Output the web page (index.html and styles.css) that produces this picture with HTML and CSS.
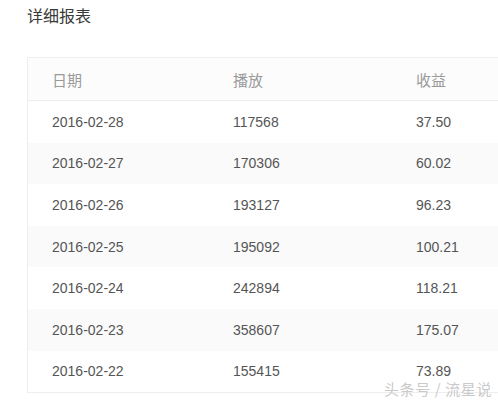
FILE: index.html
```html
<!DOCTYPE html>
<html>
<head>
<meta charset="utf-8">
<link rel="stylesheet" href="styles.css">
</head>
<body>
<div class="page">
  <h1 class="title">详细报表</h1>
  <div class="card">
    <div class="row head">
      <div class="c1">日期</div><div class="c2">播放</div><div class="c3">收益</div>
    </div>
    <div class="row"><div class="c1">2016-02-28</div><div class="c2">117568</div><div class="c3">37.50</div></div>
    <div class="row alt"><div class="c1">2016-02-27</div><div class="c2">170306</div><div class="c3">60.02</div></div>
    <div class="row"><div class="c1">2016-02-26</div><div class="c2">193127</div><div class="c3">96.23</div></div>
    <div class="row alt"><div class="c1">2016-02-25</div><div class="c2">195092</div><div class="c3">100.21</div></div>
    <div class="row"><div class="c1">2016-02-24</div><div class="c2">242894</div><div class="c3">118.21</div></div>
    <div class="row alt"><div class="c1">2016-02-23</div><div class="c2">358607</div><div class="c3">175.07</div></div>
    <div class="row"><div class="c1">2016-02-22</div><div class="c2">155415</div><div class="c3">73.89</div></div>
  </div>
  <div class="mark">头条号 / 流星说</div>
</div>
</body>
</html>
```
FILE: styles.css
```css
html, body {
  margin: 0;
  padding: 0;
  background: #fff;
  overflow: hidden;
}
body {
  width: 498px;
  height: 407px;
  font-family: "Liberation Sans", Arial, "Noto Sans CJK SC", sans-serif;
}
.page {
  position: relative;
  padding: 4px 0 0 27px;
  height: 407px;
  box-sizing: border-box;
}
.title {
  margin: 0;
  font-size: 16px;
  font-weight: normal;
  color: #3a3a3a;
  line-height: 22px;
  font-family: "Noto Sans CJK SC", sans-serif;
}
.card {
  margin-top: 31px;
  width: 471px;
  box-sizing: border-box;
  border: 1px solid #eee;
  border-right: none;
}
.row {
  display: flex;
  height: 41.6px;
  align-items: center;
  font-size: 14px;
  color: #555;
}
.row.alt {
  background: #fafafb;
}
.row.head {
  height: 42px;
  background: #fcfcfc;
  border-bottom: 1px solid #eee;
  color: #9a9a9a;
  font-family: "Noto Sans CJK SC", sans-serif;
  font-size: 15px;
}
.c1 { width: 181px; padding-left: 24px; }
.c2 { width: 183px; }
.c3 { flex: 1; }
.mark {
  position: absolute;
  left: 384px;
  top: 378px;
  font-size: 15px;
  color: #cacaca;
  font-family: "Noto Sans CJK SC", sans-serif;
  letter-spacing: 0.6px;
}
```
